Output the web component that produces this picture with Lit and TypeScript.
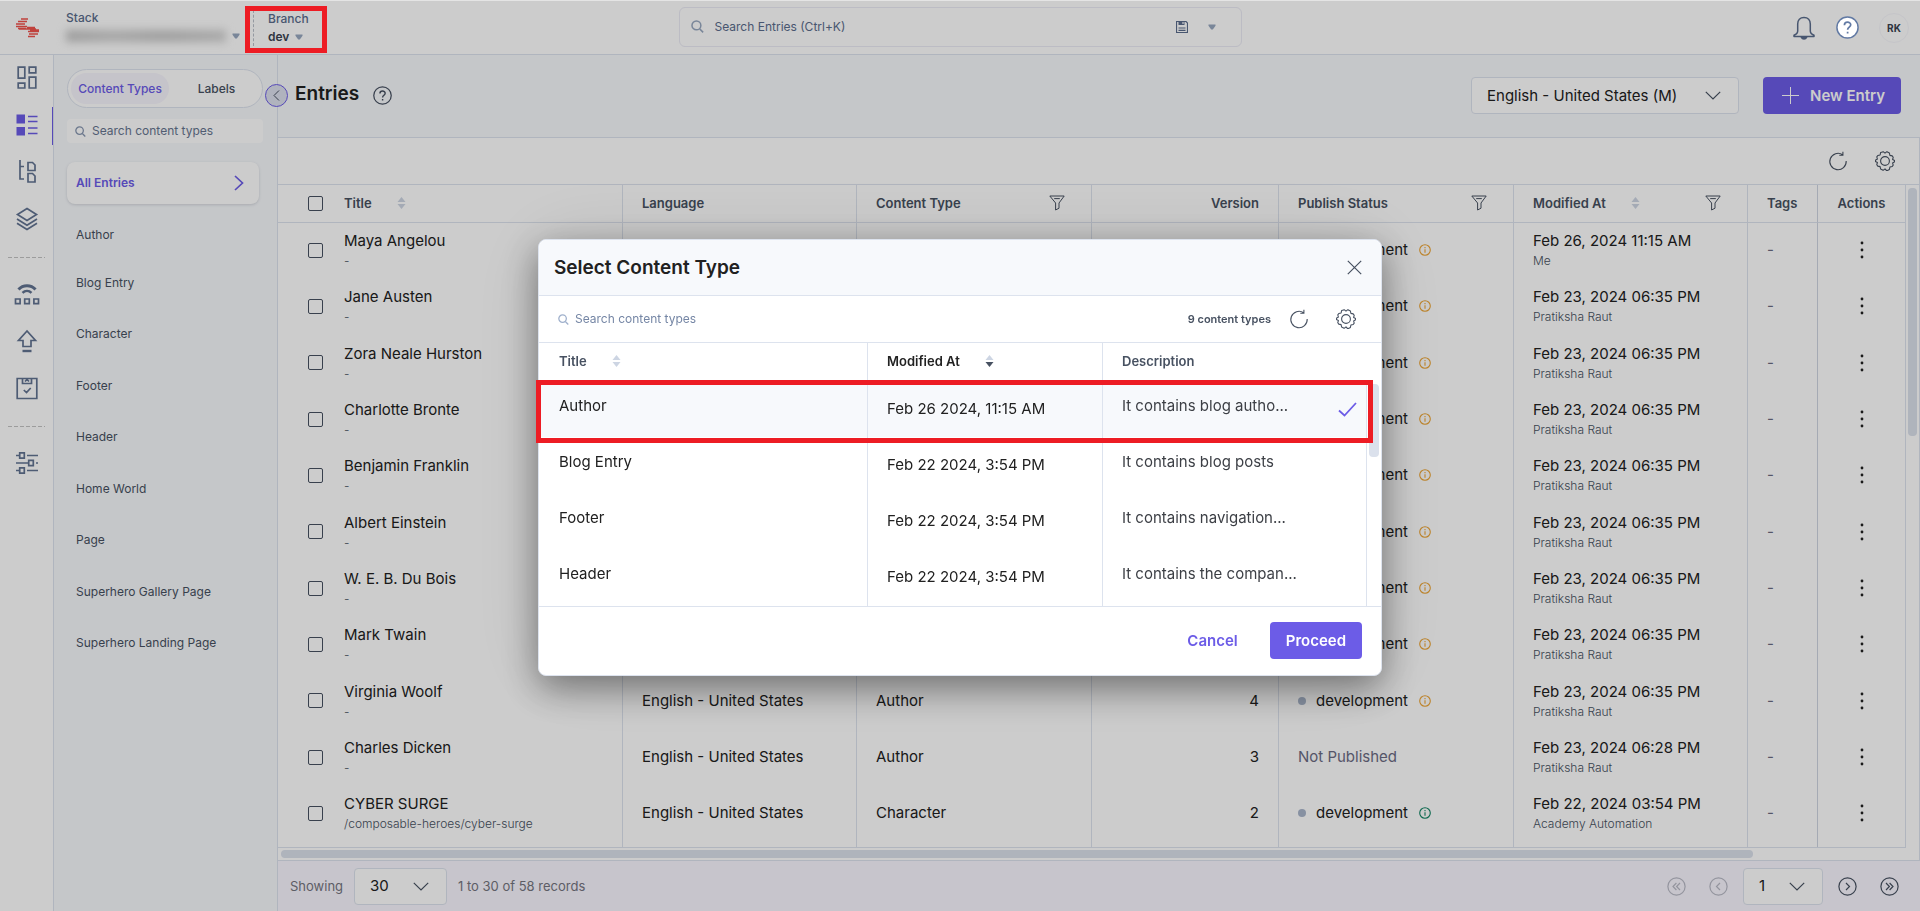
import { LitElement, html, css, svg, nothing } from "lit";
import { customElement } from "lit/decorators.js";
import { classMap } from "lit/directives/class-map.js";

interface Entry {
  title: string;
  path: string;
  type: string;
  version: number;
  status: "pending" | "live" | "none";
  date: string;
  by: string;
}

const entry = (
  title: string,
  date = "Feb 23, 2024 06:35 PM",
  by = "Pratiksha Raut",
  rest: Partial<Entry> = {}
): Entry => ({ title, path: "-", type: "Author", version: 4, status: "pending", date, by, ...rest });

const ENTRIES: Entry[] = [
  entry("Maya Angelou", "Feb 26, 2024 11:15 AM", "Me"),
  entry("Jane Austen"),
  entry("Zora Neale Hurston"),
  entry("Charlotte Bronte"),
  entry("Benjamin Franklin"),
  entry("Albert Einstein"),
  entry("W. E. B. Du Bois"),
  entry("Mark Twain"),
  entry("Virginia Woolf"),
  entry("Charles Dicken", "Feb 23, 2024 06:28 PM", "Pratiksha Raut", { version: 3, status: "none" }),
  entry("CYBER SURGE", "Feb 22, 2024 03:54 PM", "Academy Automation", {
    path: "/composable-heroes/cyber-surge",
    type: "Character",
    version: 2,
    status: "live",
  }),
];

const CONTENT_TYPES = [
  "Author",
  "Blog Entry",
  "Character",
  "Footer",
  "Header",
  "Home World",
  "Page",
  "Superhero Gallery Page",
  "Superhero Landing Page",
];

const MODAL_ROWS = [
  { title: "Author", date: "Feb 26 2024, 11:15 AM", text: "It contains blog autho...", selected: true },
  { title: "Blog Entry", date: "Feb 22 2024, 3:54 PM", text: "It contains blog posts", selected: false },
  { title: "Footer", date: "Feb 22 2024, 3:54 PM", text: "It contains navigation...", selected: false },
  { title: "Header", date: "Feb 22 2024, 3:54 PM", text: "It contains the compan...", selected: false },
];

const icon = (w: number, h: number, body: unknown, sw = 1) => html`<svg
  width=${w}
  height=${h}
  viewBox="0 0 ${w} ${h}"
  fill="none"
  stroke="currentColor"
  stroke-width=${sw}
  aria-hidden="true"
>
  ${body}
</svg>`;

const search = (s: number) => html`<svg width=${s} height=${s} viewBox="0 0 12 12" fill="none" stroke="currentColor" stroke-width="1.4" aria-hidden="true">
  <circle cx="5" cy="5" r="4.1" /><path d="M8 8.2l3.2 3.2" />
</svg>`;
const caret = icon(8, 6, svg`<path d="M.5 .5h7v1.3L4.8 5.5H3.2L.5 1.8z" fill="currentColor" stroke="none"/>`);
const chevron = icon(16, 9, svg`<path d="M.8.8 8 8 15.2.8"/>`, 1.2);
const filter = icon(16, 16, svg`<path d="M.8 1h14.4L10 8v5.2L6.6 15V8z M5.2 3.6h5.6" stroke-linejoin="round"/>`);
const refresh = icon(20, 20, svg`<path d="M14.6 3.7A8.2 8.2 0 1 0 18.2 10M14.9.8v3.4h-3.6"/>`, 1.1);
const gear = icon(
  20,
  20,
  svg`<circle cx="10" cy="10" r="4.4"/><path d="M7.6.9h.9L10 2.1 11.5.9h.9l2 1.1.5 2.4 2.3.5 1 1.4-.6 2.2 2 1.1v1.2l-2 1.1.6 2.2-1 1.4-2.3.5-.5 2.4-2 1.1h-.9L10 17.9l-1.5 1.2h-.9l-2-1.1-.5-2.4-2.3-.5-1-1.4.6-2.2-2-1.1V9.200l2-1.100-.6-2.200 1-1.400 2.300-.500.500-2.400z" stroke-linejoin="round"/>`,
  1.1
);
const sort = (down = false) => html`<svg class="sort" width="9" height="12" viewBox="0 0 9 12" aria-hidden="true">
  <path d="M4.500 0 8.500 5h-8z" fill="#cdd5e3" /><path d="M.5 7h8L4.500 12z" fill=${down ? "#475161" : "#cdd5e3"} />
</svg>`;
const info = icon(
  12,
  12,
  svg`<circle cx="6" cy="6" r="5.300"/><path d="M6 5.200v3.600M6 3v1.200"/>`,
  1.1
);
const question = (s: number) => html`<svg width=${s} height=${s} viewBox="0 0 20 20" fill="none" stroke="currentColor" stroke-width="1.300" aria-hidden="true">
  <circle class="disc" cx="10" cy="10" r="9.200" />
  <path d="M7.300 8c0-3.600 5.500-3.400 5.500-.3 0 2-2.700 2.100-2.700 4.300M10.100 13.600v1.700" stroke-width="1.500" />
</svg>`;

const pager = (dir: "first" | "prev" | "next" | "last") => {
  const d = {
    first: "M9.400 6 6 9.500l3.400 3.500M13 6 9.600 9.500 13 13",
    prev: "M11 6 7.500 9.500 11 13",
    next: "M8 6l3.500 3.500L8 13",
    last: "M6 6l3.400 3.500L6 13M9.600 6 13 9.500 9.600 13",
  }[dir];
  return icon(19, 19, svg`<circle cx="9.500" cy="9.500" r="8.600"/><path d=${d}/>`, 1.200);
};

const RAIL = [
  [
    {
      name: "Dashboard",
      on: false,
      art: svg`<path d="M4.200 2.200h6.600v11H4.200zM15.200 2.200h6.600v5.600h-6.600zM4.200 18.200h6.600v4.800H4.200zM15.200 12.200h6.600V23h-6.600z"/>`,
    },
    {
      name: "Entries",
      on: true,
      art: svg`<path d="M2.500 2.500h8.500v9H2.500zM2.500 15h8.500v8.500H2.500z" fill="currentColor" stroke="none"/><path d="M14 4.500h9.500M14 9.500h9.500M14 16h9.500M14 21.500h9.500"/>`,
    },
    {
      name: "Content Models",
      on: false,
      art: svg`<path d="M6 1v19h4M6 7.500h4M14 3.500h4.500l2.500 2.500v5.500h-7zM14 14.500h4.500L21 17v6h-7z"/>`,
    },
    {
      name: "Assets",
      on: false,
      art: svg`<path d="M13 2.500 22.500 8.500 13 14.500 3.500 8.500zM3 13l10 6.200L23 13M3 17.300l10 6.200 10-6.200"/>`,
    },
  ],
  [
    {
      name: "Live Preview",
      on: false,
      art: svg`<path d="M4.500 8.500c4.500-5 12.500-5 17 0" stroke-width="3"/><path d="M8.500 11.800c2.500-2.600 6.500-2.600 9 0" stroke-width="2.400"/><path d="M1.500 18h4.600v4.600H1.500zM10.700 18h4.600v4.600h-4.600zM19.900 18h4.600v4.600h-4.600z"/>`,
    },
    {
      name: "Releases",
      on: false,
      art: svg`<path d="M13 3 4.500 12.500H9V18.500h8V12.500h4.500z"/><path d="M8.500 23h9" stroke-width="2.400"/>`,
    },
    {
      name: "Tasks",
      on: false,
      art: svg`<path d="M3.200 3.500h19.600v20H3.200zM8.500 3.500v5h9v-5M11 6.500l2-2 2 2M9.800 15l2.700 2.500 4.200-4.500"/>`,
    },
  ],
  [
    {
      name: "Settings",
      on: false,
      art: svg`<path d="M2 5.500h3.500M13 5.500h11M5.700 2.800h4.600v5.400H5.700zM2 13h12.500M22 13h2M14.700 10.300h4.600v5.400h-4.600zM2 20.500h3.500M13 20.500h11M5.700 17.800h4.600v5.400H5.700z"/>`,
    },
  ],
];

@customElement("app-root")
export class AppRoot extends LitElement {
  static styles = css`
    * {
      box-sizing: border-box;
    }
    :host {
      display: grid;
      grid-template: auto minmax(0, 1fr) / 54px 224px minmax(0, 1fr);
      height: 100vh;
      overflow: hidden;
      background: #fff;
      color: #212121;
      font: 400 15px/20px Inter, sans-serif;
    }
    svg {
      display: block;
      flex: none;
    }
    button,
    input,
    select {
      font: inherit;
      color: inherit;
      margin: 0;
    }
    button {
      display: inline-flex;
      align-items: center;
      justify-content: center;
      padding: 0;
      border: 0;
      background: none;
    }
    ul {
      list-style: none;
      margin: 0;
      padding: 0;
    }
    h1,
    h2 {
      margin: 0;
    }

    /* top bar */
    .topbar {
      grid-column: 1 / -1;
      display: flex;
      align-items: center;
      height: 55px;
      border-top: 1px solid #e4e4e4;
      border-bottom: 1px solid #dde3ee;
      color: #5a6c8c;
      font-size: 12px;
      line-height: 18px;
    }
    .side {
      flex: 1 1 0;
      display: flex;
      align-items: center;
    }
    .logo {
      width: 53px;
      display: grid;
      place-items: center;
      color: #f0524b;
    }
    .stack {
      width: 187px;
      padding-left: 13px;
    }
    .branch {
      position: relative;
      width: 74px;
      padding-left: 14px;
      margin-left: 13px;
      border-left: 1px dashed #b9bfc9;
    }
    .label {
      font-weight: 500;
    }
    .pick {
      width: 100%;
      justify-content: flex-start;
      gap: 6px;
      height: 18px;
      font-weight: 600;
      color: #3a4250;
    }
    .pick svg {
      color: #98a8c0;
    }
    .smudge {
      width: 160px;
      height: 12px;
      background: linear-gradient(90deg, #c6c6c6, #d2d2d2 30%, #c8c8c8 60%, #d4d4d4);
      filter: blur(4px);
    }
    .mark {
      position: absolute;
      z-index: 6;
      border: 5px solid #ed1c24;
      pointer-events: none;
    }
    .mark-branch {
      inset: -4px 0 -7px -9px;
    }
    .finder {
      flex: 0 1 563px;
      display: flex;
      align-items: center;
      height: 40px;
      margin-bottom: 2px;
      padding: 0 25px 0 11px;
      border: 1px solid #ebebf5;
      border-radius: 6px;
      gap: 11px;
    }
    .finder > svg {
      color: #98a8c0;
    }
    .finder input,
    .find input {
      flex: 1;
      min-width: 0;
      border: 0;
      padding: 0;
      background: none;
      outline: 0;
    }
    .finder input::placeholder {
      color: #5a6c8c;
      opacity: 1;
    }
    .finder button + button {
      color: #98a8c0;
      margin-left: 9px;
    }
    .tools {
      justify-content: flex-end;
      gap: 20px;
    }
    .help {
      position: relative;
      z-index: 6;
      color: #627aa4;
    }
    .help .disc {
      fill: #fff;
    }
    .avatar {
      width: 30px;
      height: 30px;
      margin-right: 11px;
      border: 1px solid #f7f7fc;
      border-radius: 50%;
      font-size: 10px;
      font-weight: 700;
      color: #3a4250;
    }

    /* icon rail */
    .rail {
      border-right: 1px solid #dde3ee;
      color: #627392;
    }
    .rail ul + ul {
      margin: 14px 0 0;
      padding-top: 14px;
      background: repeating-linear-gradient(90deg, #c4c4c4 0 4px, transparent 4px 6px) 8px 0 / 37px 1px no-repeat;
    }
    .rail button {
      width: 100%;
      height: 47px;
      padding-bottom: 2px;
    }
    .rail .on {
      color: #6c5ce7;
      background: linear-gradient(#6c5ce7, #6c5ce7) right / 1px 38px no-repeat;
    }

    /* content-type panel */
    .panel {
      position: relative;
      border-right: 1px solid #dde3ee;
      background: #f7f9fc;
      padding: 14px 14px 0 13px;
      font-size: 12px;
      color: #475161;
    }
    .tabs {
      display: flex;
      height: 39px;
      padding: 3px;
      border: 1px solid #dde3ee;
      border-radius: 20px;
      background: #fff;
    }
    .tabs button {
      flex: 1;
      padding-left: 5px;
      border-radius: 16px;
      font-weight: 500;
    }
    .tabs .active {
      flex: 0 0 98px;
      padding: 0;
      color: #6c5ce7;
      background: #f7f5fd;
    }
    .find {
      display: flex;
      align-items: center;
      gap: 6px;
      color: #8796b0;
    }
    .panel .find {
      height: 24px;
      margin-top: 11px;
      padding: 0 8px;
      border-radius: 4px;
      background: #fff;
    }
    .find input::placeholder {
      color: #66758f;
      opacity: 1;
    }
    .all {
      display: flex;
      align-items: center;
      justify-content: space-between;
      height: 42px;
      margin: 19px 4px 5px 0;
      padding: 0 15px 1px 9px;
      border-radius: 8px;
      background: #fff;
      box-shadow: 0 1px 3px rgba(71, 81, 97, 0.2);
      color: #6c5ce7;
      font-weight: 600;
      text-decoration: none;
    }
    .types li {
      display: flex;
      align-items: center;
      height: 52px;
      padding-left: 9px;
    }
    .types li:nth-child(even) {
      height: 51px;
    }
    .types li:first-child {
      height: 48px;
      padding-top: 3px;
    }
    .types a {
      color: inherit;
      text-decoration: none;
    }
    .fold {
      position: absolute;
      top: 29px;
      right: -11px;
      width: 23px;
      height: 23px;
      border: 1px solid #6c5ce7;
      border-radius: 50%;
      background: #dde0ee;
      color: #475161;
    }

    /* main column */
    main {
      display: flex;
      flex-direction: column;
      min-height: 0;
    }
    .head {
      display: flex;
      align-items: center;
      height: 83px;
      padding: 0 19px 1px 17px;
      border-bottom: 1px solid #dde3ee;
      background: #f7f9fc;
      color: #475161;
    }
    .head h1,
    .d-head h2 {
      font-size: 19px;
      font-weight: 600;
      line-height: 24px;
      color: #212121;
    }
    .head h1 {
      margin-right: 14px;
      padding-bottom: 4px;
    }
    .select {
      position: relative;
      display: flex;
      align-items: center;
      color: #475161;
    }
    .select select {
      appearance: none;
      width: 100%;
      height: 37px;
      padding: 0 15px;
      border: 1px solid #dde3ee;
      border-radius: 4px;
      background: #fff;
      color: #212121;
    }
    .select svg {
      position: absolute;
      right: 18px;
      pointer-events: none;
    }
    .language {
      width: 268px;
      margin: 0 24px 0 auto;
    }
    .primary {
      height: 37px;
      padding: 0 16px;
      border-radius: 4px;
      background: #6c5ce7;
      color: #fff;
      font-weight: 600;
    }
    .new {
      gap: 11px;
      padding-left: 19px;
    }
    .grid-tools {
      display: flex;
      align-items: center;
      justify-content: flex-end;
      gap: 27px;
      height: 47px;
      padding-right: 24px;
      border-bottom: 1px solid #dde3ee;
      border-right: 1px solid #dde3ee;
      color: #475161;
    }
    .grid {
      display: flex;
      border-right: 1px solid #dde3ee;
    }
    table {
      flex: 1;
      width: 100%;
      table-layout: fixed;
      border-collapse: separate;
      border-spacing: 0;
    }
    th {
      height: 38px;
      padding: 0 0 1px 19px;
      text-align: left;
      font-size: 13px;
      font-weight: 600;
      color: #475161;
    }
    td {
      padding: 0 0 0 19px;
      height: 56px;
    }
    .entries {
      border-right: 1px solid #dde3ee;
      border-bottom: 1px solid #dde3ee;
    }
    .entries td {
      padding-bottom: 2px;
    }
    .entries th {
      border-bottom: 1px solid #dde3ee;
    }
    .entries th:nth-child(n + 3),
    .entries td:nth-child(n + 3) {
      border-left: 1px solid #dde3ee;
    }
    .entries tbody tr:nth-child(3n) td {
      height: 57px;
    }
    .entries tbody tr:last-child td {
      height: 61px;
      padding-bottom: 7px;
    }
    .entries .name {
      padding-left: 0;
    }
    .entries .tick {
      padding-left: 30px;
    }
    .entries .num {
      text-align: right;
      padding-left: 0;
      padding-right: 19px;
    }
    .entries .acts {
      padding-left: 0;
      text-align: center;
    }
    .entries tr .acts {
      border-left-color: #cfd5e1;
    }
    .acts button {
      display: flex;
      width: 100%;
      height: 30px;
    }
    .c-tick {
      width: 66px;
    }
    .c-mid {
      width: 235px;
    }
    .c-text {
      width: 234px;
    }
    .c-ver {
      width: 187px;
    }
    .c-tags {
      width: 70px;
    }
    .c-act {
      width: 88px;
    }
    .th {
      display: flex;
      align-items: center;
      gap: 25px;
    }
    .th button {
      margin: 0 26px 0 auto;
    }
    .two {
      display: flex;
      flex-direction: column;
      gap: 2px;
    }
    small {
      font-size: 12px;
      font-weight: 300;
      line-height: 16px;
      color: #475161;
    }
    .muted {
      color: #6b6b83;
    }
    input[type="checkbox"] {
      appearance: none;
      display: block;
      width: 15px;
      height: 15px;
      border: 1px solid #475161;
      border-radius: 2px;
      background: #fff;
    }
    .state {
      display: flex;
      align-items: center;
    }
    .dot {
      width: 8px;
      height: 8px;
      margin-right: 10px;
      border-radius: 50%;
      background: #a9b6cb;
    }
    .flag {
      margin-left: 11px;
      color: #eda434;
    }
    .flag.live {
      color: #118463;
    }
    .track {
      width: 13px;
      padding: 3px 2px;
    }
    .thumb {
      border-radius: 4px;
      background: #dbe1ec;
    }
    .track .thumb {
      height: 248px;
    }
    .h-track {
      padding: 2px 3px;
      border-right: 1px solid #dde3ee;
    }
    .h-track .thumb {
      width: 90%;
      height: 8px;
    }
    .foot {
      flex: 1;
      display: flex;
      align-items: center;
      border-top: 1px solid #dde3ee;
      padding: 0 21px 0 12px;
      background: #f9f7ff;
      color: #75757f;
      font-size: 13px;
    }
    .foot select {
      font-size: 15px;
    }
    .foot .size {
      width: 93px;
      margin: 0 11px;
    }
    .pages {
      display: flex;
      align-items: center;
      margin-left: auto;
      gap: 23px;
      color: #475161;
    }
    .pages .select {
      width: 80px;
      margin: 0 -8px;
    }
    .pages button:disabled {
      color: #b9bac6;
    }

    /* dialog */
    .scrim {
      position: fixed;
      inset: 1px 0 0;
      z-index: 5;
      display: grid;
      place-items: center;
      padding-top: 2px;
      background: rgba(0, 0, 0, 0.2);
    }
    .dialog {
      width: min(844px, 96vw);
      border: 1px solid #dde3ee;
      border-radius: 8px;
      background: #fff;
      box-shadow: 0 0 80px rgba(0, 0, 0, 0.1), 0 12px 36px rgba(0, 0, 0, 0.42);
    }
    .d-head {
      display: flex;
      align-items: center;
      justify-content: space-between;
      height: 56px;
      padding: 1px 19px 0 15px;
      border-bottom: 1px solid #dde3ee;
      border-radius: 8px 8px 0 0;
      background: #f7f9fc;
      color: #475161;
    }
    .d-tools {
      display: flex;
      align-items: center;
      height: 47px;
      padding: 1px 25px 0 19px;
      border-bottom: 1px solid #dde3ee;
      color: #475161;
    }
    .d-tools .find {
      flex: 1;
      font-size: 12px;
      color: #9fb0cc;
    }
    .d-tools .find input::placeholder {
      color: #7586a5;
    }
    .d-tools b {
      font-size: 11px;
      font-weight: 600;
      margin-right: 18px;
    }
    .d-tools button + button {
      margin-left: 27px;
    }
    .d-grid {
      position: relative;
      display: flex;
      border-bottom: 1px solid #dde3ee;
    }
    .d-grid th:first-child,
    .d-grid td:first-child {
      padding-left: 20px;
    }
    .d-grid th:nth-child(n + 2),
    .d-grid td:nth-child(n + 2) {
      border-left: 1px solid #dde3ee;
    }
    .d-grid td:last-child {
      border-right: 1px solid #dde3ee;
    }
    .d-grid .up {
      padding-bottom: 6px;
    }
    .d-grid tr:last-child td {
      height: 57px;
    }
    .d-grid .sorted {
      color: #222;
    }
    .d-grid .picked td {
      background: #f7f9fc;
    }
    .c-desc {
      width: 265px;
    }
    .desc {
      display: flex;
      align-items: center;
      justify-content: space-between;
      padding-right: 9px;
      color: #3c3f45;
    }
    .desc svg {
      color: #6c5ce7;
      margin-bottom: -7px;
    }
    .d-grid .track {
      width: 14px;
      padding-top: 41px;
    }
    .d-grid .track .thumb {
      height: 73px;
    }
    .mark-row {
      inset: 37px 8px auto -3px;
      height: 63px;
    }
    .d-foot {
      display: flex;
      align-items: center;
      justify-content: flex-end;
      gap: 32px;
      height: 68px;
      padding-right: 19px;
    }
    .cancel {
      color: #6c5ce7;
      font-weight: 600;
    }
  `;

  private renderTopbar() {
    return html`<header class="topbar">
      <div class="side">
        <div class="logo">
          ${icon(
            24,
            20,
            svg`<path d="M6 1h7M3 3.500h9M1 6h9M1 8.500h11M4 11h17M13 13.500h11M14 16h9M13 18.500h7M12 9.500h8M15 12h9M3 10.500h8"/>`,
            1.300
          )}
        </div>
        <div class="stack">
          <div class="label">Stack</div>
          <button class="pick" aria-label="Stack"><span class="smudge"></span>${caret}</button>
        </div>
        <div class="branch">
          <div class="label">Branch</div>
          <button class="pick">dev ${caret}</button>
          <div class="mark mark-branch"></div>
        </div>
      </div>
      <div class="finder">
        ${search(13)}
        <input type="search" aria-label="Search entries" placeholder="Search Entries (Ctrl+K)" />
        <button aria-label="Save search">
          ${icon(
            12,
            12,
            svg`<path d="M.5.5h9.500l1.500 1.500v9.500H.5z"/><path d="M2.500 0h6v4h-6z" fill="currentColor" stroke="none"/><path d="M2.500 7h7M2.500 9.300h7"/><path d="M7 1v2" stroke="#fff"/>`,
            1.200
          )}
        </button>
        <button aria-label="Search options">${caret}</button>
      </div>
      <div class="side tools">
        <button aria-label="Notifications">
          ${icon(
            24,
            24,
            svg`<path d="M12 1.500c-4 0-6.300 2.800-6.300 6.500v7c0 2-1 3.200-3.700 4.200v1.300h20v-1.300c-2.700-1-3.700-2.200-3.700-4.200V8c0-3.700-2.300-6.500-6.300-6.500z" stroke-linejoin="round"/><path d="M9.500 21.500c.8 2 4.200 2 5 0z" fill="currentColor"/>`,
            1.500
          )}
        </button>
        <button class="help" aria-label="Help">${question(23)}</button>
        <button class="avatar">RK</button>
      </div>
    </header>`;
  }

  private renderPanel() {
    return html`<aside class="panel">
      <div class="tabs"><button class="active">Content Types</button><button>Labels</button></div>
      <label class="find">${search(11)}<input type="search" aria-label="Search content types" placeholder="Search content types" /></label>
      <a class="all" href="#all">All Entries ${icon(10, 16, svg`<path d="M1 1l7.500 7L1 15"/>`, 1.700)}</a>
      <ul class="types">
        ${CONTENT_TYPES.map((t) => html`<li><a href="#type">${t}</a></li>`)}
      </ul>
      <button class="fold" aria-label="Collapse panel">${icon(7, 11, svg`<path d="M6 .5l-5 5 5 5"/>`)}</button>
    </aside>`;
  }

  private renderState(s: Entry["status"]) {
    if (s === "none") return html`<span class="muted">Not Published</span>`;
    return html`<div class="state">
      <span class="dot"></span>development<span class=${classMap({ flag: true, live: s === "live" })}>${info}</span>
    </div>`;
  }

  private renderTable() {
    const filterButton = (label: string) => html`<button aria-label="Filter by ${label}">${filter}</button>`;
    return html`<div class="grid">
      <table class="entries">
        <colgroup>
          <col class="c-tick" /><col /><col class="c-text" /><col class="c-mid" /><col class="c-ver" />
          <col class="c-mid" /><col class="c-text" /><col class="c-tags" /><col class="c-act" />
        </colgroup>
        <thead>
          <tr>
            <th class="tick"><input type="checkbox" aria-label="Select all entries" /></th>
            <th class="name"><div class="th">Title ${sort()}</div></th>
            <th>Language</th>
            <th><div class="th">Content Type ${filterButton("content type")}</div></th>
            <th class="num">Version</th>
            <th><div class="th">Publish Status ${filterButton("publish status")}</div></th>
            <th><div class="th">Modified At ${sort()} ${filterButton("date")}</div></th>
            <th>Tags</th>
            <th class="acts">Actions</th>
          </tr>
        </thead>
        <tbody>
          ${ENTRIES.map(
            (e) => html`<tr>
              <td class="tick"><input type="checkbox" aria-label="Select ${e.title}" /></td>
              <td class="name"><div class="two"><span>${e.title}</span><small>${e.path}</small></div></td>
              <td>English - United States</td>
              <td>${e.type}</td>
              <td class="num">${e.version}</td>
              <td>${this.renderState(e.status)}</td>
              <td><div class="two"><span>${e.date}</span><small>${e.by}</small></div></td>
              <td class="muted">-</td>
              <td class="acts">
                <button aria-label="Actions for ${e.title}">
                  ${icon(4, 18, svg`<g fill="currentColor" stroke="none"><circle cx="2" cy="2" r="1.400"/><circle cx="2" cy="9" r="1.400"/><circle cx="2" cy="16" r="1.400"/></g>`)}
                </button>
              </td>
            </tr>`
          )}
        </tbody>
      </table>
      <div class="track"><div class="thumb"></div></div>
    </div>`;
  }

  private renderDialog() {
    return html`<div class="scrim">
      <section class="dialog" role="dialog" aria-labelledby="dialog-title">
        <div class="d-head">
          <h2 id="dialog-title">Select Content Type</h2>
          <button aria-label="Close">${icon(15, 15, svg`<path d="M.8.8l13.400 13.400M14.200.8.8 14.200"/>`, 1.200)}</button>
        </div>
        <div class="d-tools">
          <label class="find">${search(11)}<input type="search" aria-label="Search content types" placeholder="Search content types" /></label>
          <b>9 content types</b>
          <button aria-label="Refresh">${refresh}</button>
          <button aria-label="Table settings">${gear}</button>
        </div>
        <div class="d-grid">
          <table>
            <colgroup><col /><col class="c-mid" /><col class="c-desc" /></colgroup>
            <thead>
              <tr>
                <th><div class="th">Title ${sort()}</div></th>
                <th class="sorted"><div class="th">Modified At ${sort(true)}</div></th>
                <th>Description</th>
              </tr>
            </thead>
            <tbody>
              ${MODAL_ROWS.map(
                (r) => html`<tr class=${classMap({ picked: r.selected })}>
                  <td class="up">${r.title}</td>
                  <td>${r.date}</td>
                  <td class="up">
                    <div class="desc">
                      ${r.text}${r.selected ? icon(19, 15, svg`<path d="M1 8.500l5.500 5L18 1"/>`, 1.800) : nothing}
                    </div>
                  </td>
                </tr>`
              )}
            </tbody>
          </table>
          <div class="track"><div class="thumb"></div></div>
          <div class="mark mark-row"></div>
        </div>
        <div class="d-foot"><button class="cancel">Cancel</button><button class="primary">Proceed</button></div>
      </section>
    </div>`;
  }

  render() {
    return html`
      ${this.renderTopbar()}
      <nav class="rail">
        ${RAIL.map(
          (group) => html`<ul>
            ${group.map(
              (i) => html`<li>
                <button class=${classMap({ on: i.on })} aria-label=${i.name}>${icon(26, 26, i.art, 1.700)}</button>
              </li>`
            )}
          </ul>`
        )}
      </nav>
      ${this.renderPanel()}
      <main>
        <div class="head">
          <h1>Entries</h1>
          <button aria-label="About entries">${question(19)}</button>
          <div class="select language">
            <select aria-label="Language"><option>English - United States (M)</option></select>
            ${chevron}
          </div>
          <button class="primary new">${icon(17, 17, svg`<path d="M8.500 0v17M0 8.500h17"/>`)}New Entry</button>
        </div>
        <div class="grid-tools">
          <button aria-label="Refresh">${refresh}</button>
          <button aria-label="Table settings">${gear}</button>
        </div>
        ${this.renderTable()}
        <div class="h-track"><div class="thumb"></div></div>
        <footer class="foot">
          Showing
          <div class="select size">
            <select aria-label="Rows per page"><option>30</option></select>
            ${chevron}
          </div>
          1 to 30 of 58 records
          <div class="pages">
            <button disabled aria-label="First page">${pager("first")}</button>
            <button disabled aria-label="Previous page">${pager("prev")}</button>
            <div class="select">
              <select aria-label="Page"><option>1</option></select>
              ${chevron}
            </div>
            <button aria-label="Next page">${pager("next")}</button>
            <button aria-label="Last page">${pager("last")}</button>
          </div>
        </footer>
      </main>
      ${this.renderDialog()}
    `;
  }
}
